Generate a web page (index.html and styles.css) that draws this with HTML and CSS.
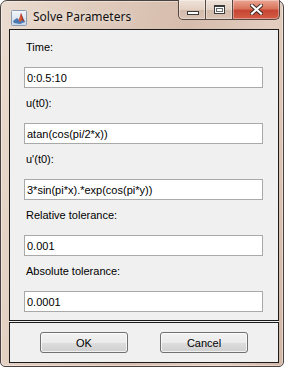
FILE: index.html
```html
<!DOCTYPE html>
<html lang="en">
<head>
  <meta charset="UTF-8" />
  <title>Solve Parameters</title>
  <link rel="stylesheet" href="styles.css">
</head>
<body>
  <div class="window">
    <div class="titlebar">
      <svg class="app-icon" width="16" height="16" viewBox="0 0 16 16">
        <defs>
          <linearGradient id="sky" x1="0" y1="0" x2="0" y2="1">
            <stop offset="0" stop-color="#f4f7fb"/>
            <stop offset="1" stop-color="#c9d6e6"/>
          </linearGradient>
        </defs>
        <rect x="0.5" y="0.5" width="15" height="15" rx="1" fill="url(#sky)" stroke="#8c9db2"/>
        <polygon points="2,11 6,8 8,10 10,3 14,12 9,14 3,13" fill="#4a78b0"/>
        <polygon points="6,8 8,10 10,3 12,9 9,12" fill="#e2552a"/>
        <polygon points="10,3 12,9 14,12 11,10" fill="#a8321a"/>
      </svg>
      <span class="title">Solve Parameters</span>
      <div class="caption">
        <div class="cb cb-min"><span class="ico-min"></span></div>
        <div class="cb cb-max"><span class="ico-max"></span></div>
        <div class="cb cb-close">
          <svg width="13" height="11" viewBox="0 0 13 11">
            <path d="M2 1.5 L11 9.5 M11 1.5 L2 9.5" stroke="#3c2a25" stroke-width="4" stroke-linecap="square"/>
            <path d="M2 1.5 L11 9.5 M11 1.5 L2 9.5" stroke="#ffffff" stroke-width="2.2" stroke-linecap="square"/>
          </svg>
        </div>
      </div>
    </div>

    <div class="client">
      <div class="panel panel-fields">
        <div class="field">
          <label for="time">Time:</label>
          <input id="time" type="text" value="0:0.5:10">
        </div>
        <div class="field">
          <label for="u0">u(t0):</label>
          <input id="u0" type="text" value="atan(cos(pi/2*x))">
        </div>
        <div class="field">
          <label for="du0">u'(t0):</label>
          <input id="du0" type="text" value="3*sin(pi*x).*exp(cos(pi*y))">
        </div>
        <div class="field">
          <label for="rtol">Relative tolerance:</label>
          <input id="rtol" type="text" value="0.001">
        </div>
        <div class="field">
          <label for="atol">Absolute tolerance:</label>
          <input id="atol" type="text" value="0.0001">
        </div>
      </div>
      <div class="panel panel-buttons">
        <button class="btn">OK</button>
        <button class="btn">Cancel</button>
      </div>
    </div>
  </div>
</body>
</html>
```

FILE: styles.css
```css
* {
  margin: 0;
  padding: 0;
  box-sizing: border-box;
}

body {
  width: 290px;
  height: 370px;
  background: #ffffff;
  overflow: hidden;
  font-family: "Liberation Sans", Arial, sans-serif;
}

.window {
  width: 284px;
  height: 367px;
  border: 1px solid #4a4240;
  border-radius: 7px 7px 5px 5px;
  padding: 0 4px 3px 8px;
  background: linear-gradient(100deg, #eadccf 0%, #dfcabb 30%, #d6bcac 55%, #e2cdbf 80%, #d2b6a6 100%);
  box-shadow: inset 0 0 0 1px rgba(255, 255, 255, 0.4);
}

.titlebar {
  height: 28px;
  display: flex;
  align-items: flex-start;
}

.app-icon {
  margin: 9px 0 0 2px;
  flex-shrink: 0;
}

.title {
  margin: 7px 0 0 6px;
  font-family: "Noto Sans", "Liberation Sans", sans-serif;
  font-size: 12px;
  color: #111;
  text-shadow: 0 0 6px rgba(255, 255, 255, 0.8);
  flex: 1;
}

.caption {
  display: flex;
  margin: -1px -1px 0 0;
  height: 20px;
}

.cb {
  height: 20px;
  border: 1px solid #564840;
  border-top: none;
  display: flex;
  align-items: center;
  justify-content: center;
  box-shadow: inset 0 0 0 1px rgba(255, 255, 255, 0.35);
}

.cb-min {
  width: 28px;
  border-radius: 0 0 0 5px;
  align-items: flex-end;
  padding-bottom: 4px;
  background: linear-gradient(#efe2d8, #e3d0c3 50%, #d3bbac 52%, #dac3b5);
}

.cb-max {
  width: 27px;
  border-left: none;
  background: linear-gradient(#efe2d8, #e3d0c3 50%, #d3bbac 52%, #dac3b5);
}

.cb-close {
  width: 47px;
  border-left: none;
  border-radius: 0 0 5px 0;
  background: linear-gradient(#eba693, #d9755d 45%, #c64632 55%, #d45e47);
}

.ico-min {
  width: 12px;
  height: 4px;
  border: 1px solid #3a3a3a;
  background: #ffffff;
  margin-left: 1px;
}

.ico-max {
  width: 11px;
  height: 9px;
  border: 1px solid #3a3a3a;
  border-top-width: 2px;
  background: #ffffff;
  box-shadow: inset 0 0 0 1px #ffffff, inset 0 0 0 2px #6a6a6a;
}

.client {
  width: 270px;
  height: 334px;
  background: #f0f0f0;
  display: flex;
  flex-direction: column;
  gap: 1px;
}

.panel {
  border: 1px solid #1c1c1c;
}

.panel-fields {
  height: 292px;
  padding: 10px 0 0 14px;
  display: flex;
  flex-direction: column;
  gap: 8px;
}

.field label {
  display: block;
  font-size: 11px;
  line-height: 14px;
  height: 14px;
  margin: 0 0 13px 2px;
  color: #000;
}

.field input {
  display: block;
  width: 239px;
  height: 21px;
  border: 1px solid #a9a9a9;
  background: #ffffff;
  padding: 0 2px;
  font-family: "Liberation Sans", Arial, sans-serif;
  font-size: 11px;
  color: #000;
  outline: none;
}

.panel-buttons {
  height: 41px;
  display: flex;
  align-items: center;
  justify-content: center;
  gap: 32px;
}

.btn {
  width: 88px;
  height: 21px;
  border: 1px solid #707070;
  border-radius: 3px;
  background: linear-gradient(#f2f2f2, #ebebeb 50%, #dddddd 51%, #cfcfcf);
  box-shadow: inset 0 0 0 1px rgba(255, 255, 255, 0.7);
  font-family: "Liberation Sans", Arial, sans-serif;
  font-size: 11px;
  color: #000;
}
```
